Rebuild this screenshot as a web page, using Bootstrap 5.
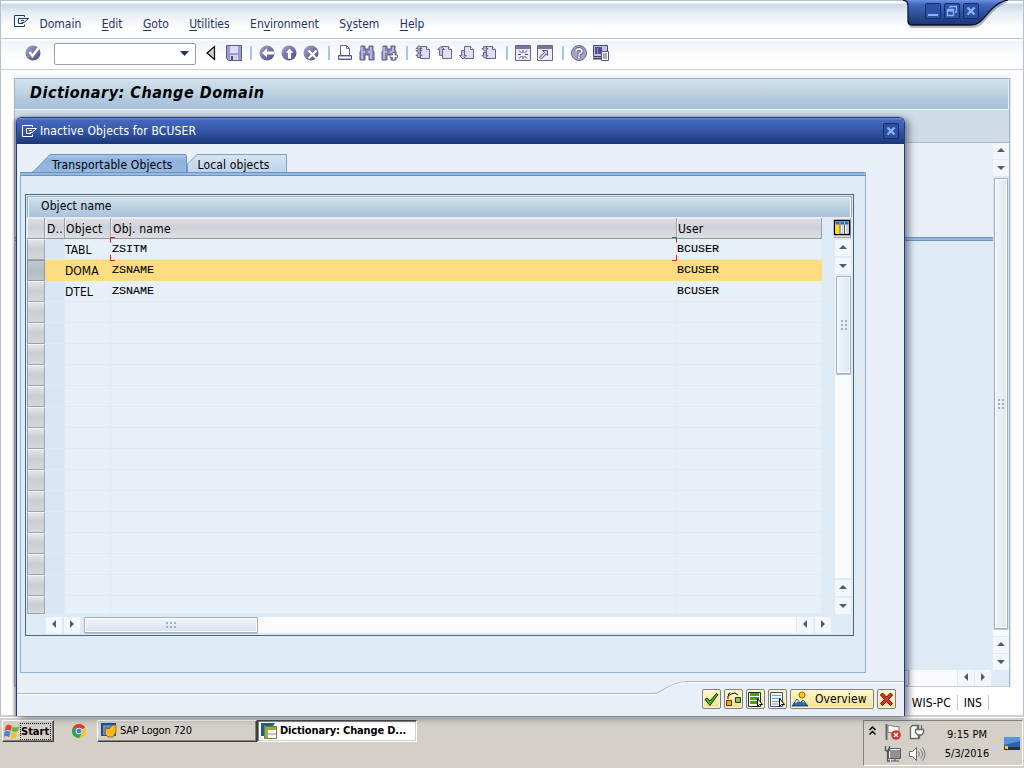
<!DOCTYPE html>
<html lang="en">
<head>
    <meta charset="UTF-8">
    <meta name="viewport" content="width=device-width, initial-scale=1.0">
    <title>Dictionary: Change Domain</title>
    <link href="https://cdn.jsdelivr.net/npm/bootstrap@5.3.2/dist/css/bootstrap.min.css" rel="stylesheet">
    <script src="https://cdn.jsdelivr.net/npm/bootstrap@5.3.2/dist/js/bootstrap.bundle.min.js"></script>
    <style>
        body { width: 1024px; height: 768px; overflow: hidden; background: #d4d0c8; color: #000; line-height: 16px;
               font-family: "DejaVu Sans Condensed", "DejaVu Sans", sans-serif; font-stretch: condensed; font-size: 12px; letter-spacing: .13px; white-space: nowrap; }
        svg { display: block; flex: none; overflow: visible; }

        /* main window */
        .sap-window { height: 716px; background: #fff; border: 1px solid #b4c0d0; border-bottom-color: #c8ccd4; }
        .menubar { height: 38px; padding: 8px 0 0 13px; color: #1c3468; border-bottom: 1px solid #bcc4d2; gap: 20.5px; letter-spacing: -.03px;
                   background: linear-gradient(#fff 0 2px, #cbd8e6 3px, #e6edf4 12px, #fff 27px); }
        .menubar svg { margin: 0 -10px 6px 0; }
        .menubar u { text-underline-offset: 2px; }
        .toolbar { height: 31px; padding: 0 0 2px 24px; gap: 6px; border-bottom: 1px solid #c8ccd6; background: linear-gradient(#fff 0 1px, #f0f4f8 2px, #fff 22px); }
        .cmd { width: 142px; height: 22px; margin: 1px 2px 0 7px; border: 1px solid #9a9c9e; border-radius: 2px; padding-right: 6px; background: #fff; }
        .sep { width: 2px; height: 14px; margin: 0 1px 0 3px; background: #a9c6e0; }
        .cmd ~ .sep:first-of-type { margin: 0 1px 0 2px; }
        .work { width: 996px; height: 609px; margin: 8px 0 0 13px; border: 1px solid #a3b4c8; border-bottom-color: #c0cbe0; background: #deebf5; box-shadow: 1px 0 #dfe5ee, 0 -3px 3px #eef2f7; }
        .screen-title { height: 30px; padding: 1px 15px 0; font-size: 16px; font-weight: 700; font-style: italic; letter-spacing: .5px; border-right: 1px solid #e6eef6;
                        background: linear-gradient(#d3e1ee, #bdd1df 50%, #b0c9df 65%, #a9c0dc); }
        .app-bar { height: 34px; background: #cfdce6; border-top: 1px solid #edf3f9; border-bottom: 1px solid #a6b6c6; }
        .work-body { width: 979px; }
        .work-head { height: 94px; background: #e8eff7; }
        .work-rule { height: 4px; background: #97b9e0; border: solid #6c93be; border-width: 1px 0; width: 978px; }
        .work-fill { height: 429px; }
        .statusbar { height: 28px; padding: 3px 34px 0 0; gap: 6px; letter-spacing: .05px; }
        .statusbar i { width: 1px; height: 15px; background: #c4c8ce; }
        .win-ctl { top: -1px; right: 12px; width: 105px; height: 30px; }
        .win-ctl .ctl { position: relative; top: 3px; left: 19px; gap: 3px; }

        /* scroll bars */
        .sb-btn { width: 16px; height: 16px; background: #f3f7fb; flex: none; display: flex; align-items: center; justify-content: center; }
        .sb-btn::after { content: ""; width: 0; height: 0; border: 4.500px solid transparent; }
        .sb-btn.up::after { border-bottom-color: #49606f; margin-top: -6px; }
        .sb-btn.dn::after { border-top-color: #49606f; margin-bottom: -3px; }
        .sb-btn.lf::after { border-right-color: #49606f; margin: -2px 0 0 -5px; }
        .sb-btn.rt::after { border-left-color: #49606f; margin: -2px -4px 0 0; }
        .track { background: #fafbfc; }
        .thumb { border: 1px solid #a0b0c0; border-radius: 1px; box-shadow: 0 1px 1px #b8c0c8, inset 0 0 0 1px #fff; background: linear-gradient(90deg, #f0f4f9, #dde8f1); display: flex; align-items: center; justify-content: center; }
        .thumb.flat { background: linear-gradient(#f2f5fa, #d5e2ee); }
        .grip { width: 6px; height: 10px; background: radial-gradient(circle at 1px 1px, #9fb0c2 1px, transparent 1.300px) 0 0 / 4px 4px; }
        .flat .grip { width: 10px; height: 6px; }

        /* dialog */
        .dlg { left: 15px; top: 116px; width: 889px; height: 599px; background: #e8eff7; border: 1px solid #213c76; border-bottom: 0; border-radius: 6px 6px 0 0; box-shadow: 4px 2px 7px rgba(60, 70, 90, .65), -2px 0 3px rgba(60, 70, 90, .5); }
        .dlg-title { height: 26px; padding: 0 5px; color: #fff; border-radius: 5px 5px 0 0; background: linear-gradient(#6f92dc 0, #4469bd 2px, #3a5cac 10px, #284892 19px, #1b3674); }
        .tabs-row { height: 28px; margin-left: 3px; padding: 13px 0 0 32px; gap: 25px; }
        .tabs-row svg { left: 0; top: 10px; }
        .tab-panel { width: 846px; height: 501px; margin-left: 3px; background: #deebf5; border: 1px solid #8eb0d4; border-top: 0; padding: 22px 11px 36px 4px; border-radius: 0 3px 0 0; }
        .tab-panel::before { content: ""; position: absolute; left: 3px; top: 54px; width: 846px; height: 4px; background: #97b9e0; border: solid #6c93be; border-width: 1px 0; border-radius: 0 2px 0 0; }
        .grid-box { width: 829px; height: 442px; border: 1px solid #4c6678; padding: 1px; }
        .grid-title { height: 21px; padding: 0 0 2px 13px; margin-bottom: 1px; border: 1px solid #98a8b8; border-bottom: 0; box-shadow: inset 1px 1px #e7f0f8, inset -1px 0 #fff; background: linear-gradient(#d2e1ef, #bad0e0 55%, #a9c2dc); }
        .alv { width: 795px; }
        .alv-row { display: grid; grid-template-columns: 18px 20px 46px 566px 145px; height: 21px; }
        .alv-row > div { border-right: 1px solid #deebf5; border-bottom: 1px solid #deebf5; background: #e8f0f7; line-height: 23px; overflow: hidden; letter-spacing: 0; }
        .alv-row > div:nth-child(2) { background: #d8e5f4; border-left: 1px solid #deebf5; }
        .alv-row > div:nth-child(4) { padding-left: 1px; }
        .alv-row > .rowsel { background: linear-gradient(#e2e4e7, #c9cdd6 45%, #d4d8da); border: 1px solid #9ca4b0; border-top-color: #f2f4f6; }
        .alv-row.head > div { background: linear-gradient(#dee0e3, #ced1d7 45%, #dbdfe0); border-right: 1px solid #98a2ae; border-bottom: 1px solid #8f9aa6; box-shadow: inset 1px 1px #ebedef; padding-left: 1px; line-height: 22px; letter-spacing: .22px; }
        .alv-row.head > div:nth-child(4) { padding-left: 2px; }
        .alv-row.picked > div { background: #fddc82; border-color: #fddc82; }
        .alv-row.picked > .rowsel { background: linear-gradient(#c3c9d0, #b3bbc6 50%, #bdc5cc); border-color: #8e98a6; }
        .alv-row:last-child { height: 18px; }
        .alv-row > .fix { font-family: "Liberation Mono", monospace; font-size: 11.67px; -webkit-text-stroke: .12px #000; line-height: 21px; }
        .focus-corner { left: 83px; top: 19px; width: 567px; height: 24px; }
        .side-scroll { width: 29px; gap: 2px; }
        .cfg { width: 18px; height: 20px; border: 1px solid #98a0ac; border-top-color: #eee; border-left-color: #eee; background: #dcdfe2; }
        .bottom-scroll { margin: 3px 0 0 19px; }
        .dlg-foot { height: 43px; padding: 16px 8px 0 0; gap: 3px; }
        .dlg-foot > svg { left: 0; top: 0; }
        .ybtn { height: 20px; width: 19px; border: 1px solid #7d7f83; border-radius: 2px; box-shadow: inset 0 0 0 1px #fff7cc; background: linear-gradient(#fff7cc, #f4e094); padding: 0; position: relative; color: #000; }
        .ybtn.wide { width: 84px; padding-left: 1px; gap: 7px; letter-spacing: .1px; }

        /* taskbar */
        .taskbar { height: 52px; padding: 4px 1px 0 2px; background: #d4d0c8; box-shadow: inset 0 1px #d4d0c8, inset 0 2px #fff; font-size: 11px; letter-spacing: -.2px; }
        .tb-btn { height: 22px; width: 160px; border: 1px solid; border-color: #fff #404040 #404040 #fff; box-shadow: inset -1px -1px #808080; background: #d4d0c8; padding-left: 3px; gap: 3px; }
        .tb-btn.on { background: #fff; border-color: #404040 #fff #fff #404040; box-shadow: inset 1px 1px #808080, inset -1px -1px #d4d0c8; font-weight: 700; letter-spacing: -.15px; }
        .tb-btn.start { width: 52px; font-weight: 700; padding-left: 1px; gap: 0; letter-spacing: 0; }
        .start span { outline: 1px dotted #000; line-height: 15px; width: 29px; }
        .chrome { margin: 4px 11px 0 18px; }
        .tray { width: 160px; height: 46px; border: 1px solid; border-color: #808080 #fff #fff #808080; }
        .tray-icons { width: 48px; padding-top: 3px; gap: 6px 8px; }
        .clock { line-height: 19px; letter-spacing: 0; width: 58px; margin: 4px 0 0 5px; }
    </style>
</head>
<body class="d-flex flex-column">

<!-- shared icons -->
<svg width="0" height="0" class="position-absolute">
    <defs>
        <linearGradient id="ball" x1="0" y1="0" x2="1" y2="1"><stop offset="0" stop-color="#a6a6cc"/><stop offset="1" stop-color="#474784"/></linearGradient>
        <linearGradient id="ctlbg" x1="0" y1="0" x2="0" y2="1"><stop offset="0" stop-color="#6b90e6"/><stop offset=".2" stop-color="#4065ba"/><stop offset="1" stop-color="#1a3474"/></linearGradient>
        <symbol id="exit" viewBox="0 0 15 12"><path d="M10.500 2V.5H.5v11h10V9.500M9 8.500H4.500v-5h10L10 7.500H7.500M7 5.500h3" fill="none" stroke="currentColor"/></symbol>
        <symbol id="closeX" viewBox="0 0 16 16"><rect x=".5" y=".5" width="15" height="15" rx="1.500" fill="#2d4f9f" stroke="#172f68"/><path d="M4.500 4.500l7 7m0-7l-7 7" stroke="#8db0fa" stroke-width="2.400"/></symbol>
        <symbol id="doc" viewBox="0 0 10 13"><path d="M.5.5h6l3 3v9h-9z" fill="#dfdff4" stroke="#66668c"/><path d="M6.500.5v3h3" fill="#fff" stroke="#66668c"/></symbol>
        <symbol id="bino" viewBox="0 0 16 16"><path d="M2 1h4v3h4V1h4v4l1 2v8h-5v-5H6v5H1V7l1-2z" fill="#8484b0" stroke="#60608e"/><path d="M3 2v12M12 2v12M5 6v2M10 6v2" stroke="#c8c8ea" stroke-width="1.500"/></symbol>
    </defs>
</svg>

<div class="sap-window position-relative">
    <div class="menubar d-flex align-items-center">
        <svg width="15" height="12"><use href="#exit"/></svg>
        <span>Domain</span>
        <span><u>E</u>dit</span>
        <span><u>G</u>oto</span>
        <span><u>U</u>tilities</span>
        <span>En<u>v</u>ironment</span>
        <span>S<u>y</u>stem</span>
        <span><u>H</u>elp</span>
    </div>

    <div class="toolbar d-flex align-items-center">
        <svg width="16" height="16"><circle cx="8" cy="8" r="7.500" fill="url(#ball)"/><path d="M4.500 7l3 4L13.500 3" fill="none" stroke="#fff" stroke-width="2.500"/></svg>
        <div class="cmd d-flex align-items-center justify-content-end"><svg width="9" height="5"><path d="M0 0h9L4.500 5z" fill="#1c3468"/></svg></div>
        <svg width="16" height="16"><path d="M10.500 1.500v13L3 8z" fill="#c9ccd0" stroke="#000" stroke-width="1.200"/></svg>
        <svg width="16" height="16"><path d="M.5.5h15v15h-13l-2-2z" fill="#9c9cca" stroke="#5c5c8a"/><path d="M4 1h8v7H4z" fill="#dcdcff"/><path d="M4 10h8v5H4z" fill="#d0d0e4"/><path d="M5 11h2v4H5z" fill="#4f4f7c"/></svg>
        <i class="sep"></i>
        <svg width="16" height="16"><circle cx="8" cy="8" r="7.500" fill="url(#ball)"/><path d="M3 8l5-4.500v3h7v3H8v3z" fill="#fff"/></svg>
        <svg width="16" height="16"><circle cx="8" cy="8" r="7.500" fill="url(#ball)"/><path d="M8.500 3l4.500 5h-2.500v6h-4V8H4z" fill="#fff" stroke="#55558a" stroke-width=".6"/></svg>
        <svg width="16" height="16"><circle cx="8" cy="8" r="7.500" fill="url(#ball)"/><path d="M5.500 5.500l8 8m0-8l-8 8" stroke="#fff" stroke-width="2.300"/></svg>
        <i class="sep"></i>
        <svg width="16" height="16"><path d="M3.500 10.500v-10h6l3 3v7" fill="#fff" stroke="#66668c"/><path d="M9.500.5v3h3" fill="none" stroke="#66668c"/><path d="M1.500 10.500h13v4h-13z" fill="#b8b8da" stroke="#55557e"/><path d="M2 12.500h12" stroke="#fff"/></svg>
        <svg width="16" height="16"><use href="#bino"/></svg>
        <svg width="16" height="16"><use href="#bino"/><path d="M9 10h2.500V7.500h2.500V10h2.500v2.500H14V15h-2.500v-2.500H9z" fill="#f4f4ff" stroke="#66668c" stroke-width=".9"/></svg>
        <i class="sep"></i>
        <svg width="16" height="16"><use href="#doc" x="5" y="1" width="10" height="13"/><path d="M4 .5l3 3H5v2h2l-3 3-3-3h2v-2H1zM4 7.500l3 3H5.500v2h-3v-2H1z" fill="#b4b4d8" stroke="#5c5c84" stroke-width=".9"/></svg>
        <svg width="16" height="16"><use href="#doc" x="5" y="1" width="10" height="13"/><path d="M.5 4.500l3.500-3 3.500 3h-2v6h-3v-6z" fill="#c4c4e2" stroke="#5c5c84" stroke-width=".9"/></svg>
        <svg width="16" height="16"><use href="#doc" x="5" y="1" width="10" height="13"/><path d="M.5 10.500l3.500 3.500 3.500-3.500h-2v-5h-3v5z" fill="#c4c4e2" stroke="#5c5c84" stroke-width=".9"/></svg>
        <svg width="16" height="16"><use href="#doc" x="5" y="1" width="10" height="13"/><path d="M2.500 1.500h3v2H7l-3 3-3-3h1.500zM2.500 7.500h3v3H7l-3 3-3-3h1.500z" fill="#b4b4d8" stroke="#5c5c84" stroke-width=".9"/></svg>
        <i class="sep"></i>
        <svg width="16" height="16"><path d="M.5.5h15v15H.5z" fill="#ececfa" stroke="#66668c"/><path d="M1 1h14v3H1z" fill="#75759e"/><path d="M8 5v3m0 3v3M3 9.500h3m4 0h3M4 5.500l2.500 2.500m3 3L12 13.500M12 5.500L9.500 8M6.500 11L4 13.500" stroke="#44446e"/></svg>
        <svg width="16" height="16"><path d="M.5.5h15v15H.5z" fill="#ececfa" stroke="#66668c"/><path d="M1 1h14v3H1z" fill="#75759e"/><path d="M5.500 5.500h5v5L9 9l-4.500 5-2-2 5-4.500z" fill="#cfcff0" stroke="#55557e"/></svg>
        <i class="sep"></i>
        <svg width="16" height="16"><circle cx="8" cy="8" r="7.500" fill="#a3a3cb" stroke="#66668f"/><path d="M5 6.500C5 3 11 3 11 6.300 11 8.500 8 8 8 10.200M8 11.500v2" fill="none" stroke="#55557e" stroke-width="3.400"/><path d="M5 6.500C5 3 11 3 11 6.300 11 8.500 8 8 8 10.200M8 11.500v2" fill="none" stroke="#fff" stroke-width="1.800"/></svg>
        <svg width="16" height="16"><path d="M.5.500h14v11H.5z" fill="#c0c0e4" stroke="#44446e"/><path d="M2 2h7v7H2z" fill="#50508c"/><path d="M4 3h1v6H4z" fill="#8888c0"/><path d="M0 13.500h9" stroke="#44446e" stroke-width="2"/><path d="M8.500 6.500h7v9h-7z" fill="#fff" stroke="#55557e"/><path d="M10 9h4m-4 2h4m-4 2h4" stroke="#55557e"/></svg>
    </div>

    <div class="work">
        <div class="screen-title d-flex align-items-center"><span class="pb-1">Dictionary: Change Domain</span></div>
        <div class="app-bar"></div>
        <div class="d-flex">
            <div class="work-body">
                <div class="work-head"></div>
                <div class="work-rule"></div>
                <div class="work-fill"></div>
                <div class="d-flex justify-content-end" style="gap:1px;padding-right:2px">
                    <div class="thumb flat" style="width:22px"></div>
                    <div class="track" style="width:47px"></div>
                    <span class="sb-btn lf"></span><span class="sb-btn rt"></span>
                </div>
            </div>
            <div class="d-flex flex-column" style="gap:1px">
                <span class="sb-btn up"></span><span class="sb-btn dn"></span>
                <div class="thumb" style="height:451px;width:14px;margin:1px 0 0 1px"><i class="grip"></i></div>
                <div class="track" style="height:6px"></div>
                <span class="sb-btn up"></span><span class="sb-btn dn"></span>
            </div>
        </div>
    </div>

    <div class="statusbar d-flex align-items-center justify-content-end">
        <span>WIS-PC</span><i></i><span>INS</span><i></i>
    </div>

    <div class="win-ctl position-absolute">
        <svg class="position-absolute" width="105" height="30"><path d="M-1 3c4 1 4 3 4 7v14c0 3 1 4 4 4h59c8 0 12-6 18-13S97 4 102 2z" fill="#222" opacity=".3"/><path d="M-3 0c5 1 5 3 5 7v14c0 3 1 4 4 4h59c8 0 12-6 18-13S95 1 102 0z" fill="url(#ctlbg)"/><path d="M-3 0c5 1 5 3 5 7v14c0 3 1 4 4 4h59c8 0 12-6 18-13S95 1 102 0" fill="none" stroke="#0a1430" stroke-width="1.300"/></svg>
        <div class="ctl d-flex">
            <svg width="16" height="16"><rect x=".5" y=".5" width="15" height="15" rx="1.500" fill="#2f52a4" stroke="#172f68"/><path d="M3 12h10" stroke="#8db0fa" stroke-width="2"/></svg>
            <svg width="16" height="16"><rect x=".5" y=".5" width="15" height="15" rx="1.500" fill="#2f52a4" stroke="#172f68"/><path d="M6 5V3.500h6.500V9H11M3.500 6.500h6v6h-6zM3 8h7" fill="none" stroke="#8db0fa" stroke-width="1.300"/></svg>
            <svg width="16" height="16"><use href="#closeX"/></svg>
        </div>
    </div>

    <!-- list of inactive objects -->
    <div class="dlg position-absolute">
        <div class="dlg-title d-flex align-items-center">
            <svg width="15" height="12"><use href="#exit"/></svg>
            <span class="flex-grow-1" style="margin-left:3px">Inactive Objects for BCUSER</span>
            <svg width="16" height="16"><use href="#closeX"/></svg>
        </div>
        <div class="tabs-row d-flex position-relative">
            <svg class="position-absolute" width="270" height="19">
                <defs>
                    <linearGradient id="t1" x1="0" y1="0" x2="0" y2="1"><stop offset="0" stop-color="#a9c8e8"/><stop offset=".3" stop-color="#8db3de"/><stop offset="1" stop-color="#97b9e0"/></linearGradient>
                    <linearGradient id="t2" x1="0" y1="0" x2="0" y2="1"><stop offset="0" stop-color="#d3e3f2"/><stop offset="1" stop-color="#bcd3ea"/></linearGradient>
                </defs>
                <path d="M167.500 19V10L177 .5h89.500V19z" fill="url(#t2)" stroke="#7aa0c8"/>
                <path d="M8 19c4 0 5-1 8-4L30 .5h135.500l1 1V19z" fill="url(#t1)" stroke="#6c93be"/>
            </svg>
            <span class="position-relative">Transportable Objects</span>
            <span class="position-relative">Local objects</span>
        </div>
        <div class="tab-panel">
            <div class="grid-box">
                <div class="grid-title d-flex align-items-center">Object name</div>
                <div class="d-flex">
                    <div class="alv position-relative" id="alv">
                        <div class="alv-row head"><div></div><div>D..</div><div>Object</div><div>Obj. name</div><div>User</div></div>
                    </div>
                    <div class="side-scroll d-flex flex-column align-items-end">
                        <div class="cfg"><svg width="16" height="16"><path d="M.5 1.500h15v14H.5z" fill="#fff" stroke="#000" stroke-width="1.400"/><path d="M2 5h3.500v10H2z" fill="#ffe000"/><path d="M6 5v10M10.500 5v10" stroke="#555"/><path d="M8.500 5v10M13 5v10" stroke="#ccd0d8" stroke-width="2"/><path d="M1.500 2.500h13v3h-13z" fill="#2a6cb4"/><path d="M6 2.500v3M10.500 2.500v3" stroke="#8fc0ee"/></svg></div>
                        <span class="sb-btn up"></span><span class="sb-btn dn"></span>
                        <div class="track d-flex flex-column align-items-end" style="width:16px;height:302px">
                            <div class="thumb" style="width:15px;height:98px"><i class="grip"></i></div>
                        </div>
                        <span class="sb-btn up"></span><span class="sb-btn dn"></span>
                    </div>
                </div>
                <div class="bottom-scroll d-flex">
                    <span class="sb-btn lf"></span><span class="sb-btn rt" style="margin-left:2px"></span>
                    <div class="thumb flat ms-1" style="width:174px"><i class="grip"></i></div>
                    <div class="track" style="width:538px;margin-right:1px"></div>
                    <span class="sb-btn lf"></span><span class="sb-btn rt" style="margin-left:2px"></span>
                </div>
            </div>
        </div>
        <div class="dlg-foot d-flex justify-content-end position-relative">
            <svg class="position-absolute" width="887" height="43"><path d="M0 20.500h636c10 0 16-11.500 34-12h217" fill="none" stroke="#a9b9cc" stroke-width="1.200"/><path d="M0 21.500h636c10 0 16-11.500 34-12h217" fill="none" stroke="#fff"/></svg>
            <button class="ybtn"><svg width="17" height="17"><path d="M2 8.500l2-1.500 3 3 6.500-7.500 1.500 1L7 14.500z" fill="#4fae2e" stroke="#143a0a"/></svg></button>
            <button class="ybtn"><svg width="17" height="17"><path d="M3 8V5l3-2 4-1 3 2M5 1.500L3 4" fill="none" stroke="#000"/><path d="M1.500 9.500h5v5h-5z" fill="#f8a818" stroke="#5a2a00"/><path d="M10.500 6.500h5v5h-5z" fill="#8ec44a" stroke="#22400e"/></svg></button>
            <button class="ybtn"><svg width="17" height="17"><path d="M1.500 1.500h12v14h-12z" fill="#fff" stroke="#1e2b12"/><path d="M3 3.500h9M3 7.500h9M3 11.500h9" stroke="#4c9a28" stroke-width="3"/><path d="M10.500 7.500v8l2-2h3z" fill="#fff" stroke="#000"/></svg></button>
            <button class="ybtn"><svg width="17" height="17"><path d="M1.500 1.500h12v14h-12z" fill="#f4f9ff" stroke="#44525f"/><path d="M3 4.500h9M3 7.500h9M3 10.500h9M3 13h6" stroke="#6b9cc8"/><path d="M10.500 7.500v8l2-2h3z" fill="#fff" stroke="#000"/></svg></button>
            <button class="ybtn wide d-flex align-items-center"><svg width="16" height="16"><circle cx="10" cy="4" r="3" fill="#ffc81e" stroke="#9a6000"/><path d="M0 15l5-7 3 4 3-3 5 6z" fill="#2b6cb0" stroke="#17365e" stroke-width=".8"/><path d="M5 8.500l2 3-1.500-1L4 12l-1-.5zM11 9.500l1.500 2-1.500-.5-1 1z" fill="#fff"/></svg><span>Overview</span></button>
            <button class="ybtn"><svg width="17" height="17"><path d="M2.500 4l2-2L8.500 6l4-4 2 2-4 4.500 4 4-2 2-4-4-4 4-2-2 4-4z" fill="#e03030" stroke="#5c0808"/></svg></button>
        </div>
    </div>
</div>

<div class="taskbar d-flex">
    <div class="tb-btn start d-flex align-items-center">
        <svg width="17" height="16"><path d="M2 3c2-2 4-1 6 0L6.500 8C5 6.500 3 6.500.5 8z" fill="#e0462a"/><path d="M9 3.500c2 1 4 1.500 6.500-.5L14 8c-2 1.500-4.500 1.500-6.500 0z" fill="#6cb33e"/><path d="M.5 9c2-1.500 4-1 6 0L5 14c-2-1-4-1.500-5 0z" fill="#3f86dc"/><path d="M7.500 9.500c2 1 4 1 6 0L12 14.500c-2 1-4.500 1-6 0z" fill="#f6be2c"/></svg>
        <span>Start</span>
    </div>
    <svg class="chrome" width="14" height="14" viewBox="0 0 14 14"><circle cx="7" cy="7" r="7" fill="#f2c32c"/><path d="M7 7L.9 3.500A7 7 0 0 1 13.100 3.500z" fill="#dc3c30"/><path d="M7 7L.9 3.500A7 7 0 0 0 7 14l3-5z" fill="#2f9e52"/><circle cx="7" cy="7" r="3.300" fill="#fff"/><circle cx="7" cy="7" r="2.500" fill="#3f7ee0"/></svg>
    <div class="tb-btn d-flex align-items-center">
        <svg width="16" height="16"><path d="M0 0h15v13H0z" fill="#214c8c"/><path d="M2 2h12v10H2z" fill="#5d8cc8"/><path d="M5 5l3 1 4-4h3v7l-3 5H7l-3-3z" fill="#f6b81c" stroke="#8a5a08" stroke-width=".8"/></svg>
        <span>SAP Logon 720</span>
    </div>
    <div class="tb-btn on d-flex align-items-center">
        <svg width="16" height="16"><path d="M0 0h14l-2 3H3v10H0z" fill="#2458a0"/><path d="M3.500 3.500h12v12h-12z" fill="#fff" stroke="#6d8420"/><path d="M4 4h11v3H4zM4 7h3v8H4z" fill="#9aae3c"/><path d="M7 11h8" stroke="#888"/></svg>
        <span>Dictionary: Change D...</span>
    </div>
    <div class="tray d-flex ms-auto">
        <svg style="margin:5px 9px 0 5px" width="7" height="9"><path d="M.5 4L3.500 1l3 3M.5 8.500l3-3 3 3" fill="none" stroke="#000" stroke-width="1.500"/></svg>
        <div class="tray-icons d-flex flex-wrap align-content-start">
            <svg width="16" height="16"><path d="M1.500 0v16" stroke="#66686c" stroke-width="2"/><path d="M3 1.500c4-1 5 2 11 1v7c-5 1-7-2-11-1z" fill="#fff" stroke="#77797d"/><circle cx="11" cy="11" r="4.800" fill="#dd2f2b"/><path d="M9 9l4 4m0-4l-4 4" stroke="#fff" stroke-width="1.500"/></svg>
            <svg width="16" height="16"><path d="M3.500 1.500h6v13h-8v-11z" fill="#fff" stroke="#66686c" stroke-width="1.300"/><path d="M8.500 5V1m4 4V1M6.500 5.500h8v3l-2 2.500H9L6.500 8.500zM10.500 11v4" fill="#fff" stroke="#66686c" stroke-width="1.300"/></svg>
            <svg width="16" height="16"><path d="M4.500 3.500h11v9h-11z" fill="#8e9092" stroke="#fff"/><path d="M3.500 2.500h12v10h-12zM6 15h8M10 13v2" fill="none" stroke="#55575b"/><path d="M.5 0v4.500h4V0M2.500 5v10H5" fill="none" stroke="#55575b" stroke-width="1.300"/></svg>
            <svg width="16" height="16"><path d="M.5 5.500h3l4-4v13l-4-4h-3z" fill="#fff" stroke="#66686c"/><path d="M9.500 5.500q2 2.500 0 5M11.500 3.500q4 4.500 0 9M13.500 1.500q5 6.500 0 13" fill="none" stroke="#77797d"/></svg>
        </div>
        <div class="clock text-center">9:15 PM<br>5/3/2016</div>
        <svg style="margin:16px 0 0 8px" width="16" height="13"><path d="M0 0h16v13H0z" fill="#2c62b8"/><path d="M0 0h16v4L0 8z" fill="#5a92e0"/><path d="M0 10h16v3H0z" fill="#28323e"/><path d="M1 9h3v3H1z" fill="#ffc840"/></svg>
    </div>
</div>

<script>
const alv = document.getElementById('alv');
const objects = [
    ['TABL', 'ZSITM', 'BCUSER'],
    ['DOMA', 'ZSNAME', 'BCUSER'],
    ['DTEL', 'ZSNAME', 'BCUSER']
];

for (let i = 0; i < 18; i++) {
    const [type, name, user] = objects[i] || ['', '', ''];
    const row = document.createElement('div');
    row.className = 'alv-row' + (i === 1 ? ' picked' : '');
    row.innerHTML = `<div class="rowsel"></div><div></div><div>${type}</div><div class="fix">${name}</div><div class="fix">${user}</div>`;
    alv.appendChild(row);
}

// red corners round the focused cell
alv.insertAdjacentHTML('afterbegin', '<svg class="focus-corner position-absolute"><path d="M5 .5H.5v5M.5 18v5.500H5M562 .5h4.500v5M566.500 18v5.500H562" fill="none" stroke="#e02020"/></svg>');
</script>

</body>
</html>
